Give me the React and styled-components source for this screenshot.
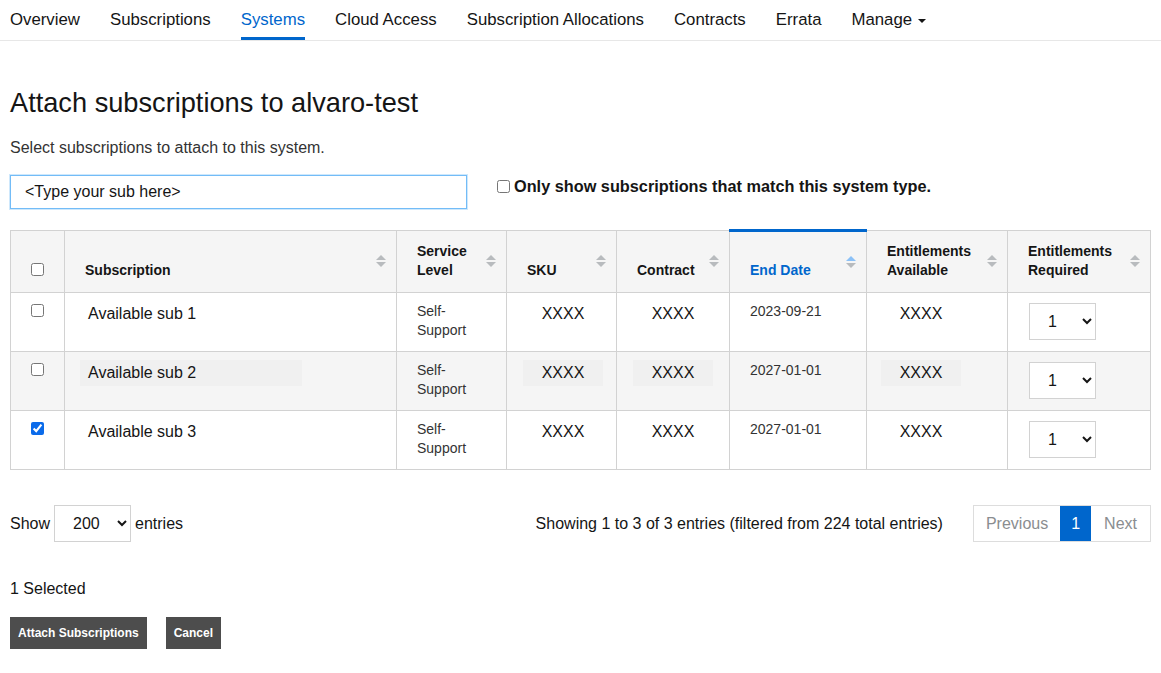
import React from 'react'
import styled, { createGlobalStyle } from 'styled-components'

const GlobalStyle = createGlobalStyle`
body {
  margin: 0;
  background: #fff;
  color: #151515;
  font-family: "Liberation Sans", Arial, sans-serif;
}
* { box-sizing: border-box; }
`

const Nav = styled.nav`
  display: flex;
  gap: 30px;
  padding: 0 10px;
  height: 41px;
  border-bottom: 1px solid #e7e7e7;
`

const NavItem = styled.a`
  display: flex;
  align-items: center;
  gap: 6px;
  font-size: 16.8px;
  font-weight: 500;
  color: ${p => (p.$active ? '#0066cc' : '#151515')};
  border-bottom: 3px solid ${p => (p.$active ? '#0066cc' : 'transparent')};
  padding-top: 3px;
  height: 40px;
  text-decoration: none;
`

const Caret = styled.span`
  width: 0;
  height: 0;
  border-left: 4px solid transparent;
  border-right: 4px solid transparent;
  border-top: 4px solid #151515;
  margin-top: 2px;
`

const Main = styled.main`
  padding: 0 10px;
`

const Title = styled.h1`
  margin: 46px 0 0;
  font-size: 27.2px;
  font-weight: 400;
  line-height: 32px;
`

const Lead = styled.p`
  margin: 18px 0 0;
  font-size: 16px;
  color: #333;
  line-height: 22px;
`

const FilterRow = styled.div`
  display: flex;
  align-items: flex-start;
  gap: 30px;
  margin-top: 16px;
`

const SearchInput = styled.input`
  width: 457px;
  height: 34px;
  border: 1px solid #73bcf7;
  box-shadow: 0 0 0 1px rgba(115, 188, 247, 0.35);
  padding: 0 14px;
  font-size: 16px;
  font-family: inherit;
  color: #151515;
  &::placeholder { color: #151515; }
`

const CheckLabel = styled.label`
  display: flex;
  align-items: center;
  gap: 4px;
  font-size: 16.3px;
  font-weight: 700;
  margin-top: 2px;
`

const Box = styled.input.attrs({ type: 'checkbox' })`
  display: block;
  width: 13px;
  height: 13px;
  margin: 0;
  accent-color: #0b6bea;
`

const Table = styled.table`
  width: 1140px;
  table-layout: fixed;
  margin-top: 20px;
  border-collapse: collapse;
  border: 1px solid #d2d2d2;
`

const Th = styled.th`
  position: relative;
  width: ${p => p.$w}px;
  height: 62px;
  background: #f5f5f5;
  border: 1px solid #d2d2d2;
  border-top: ${p => (p.$sorted ? '3px solid #0066cc' : '1px solid #d2d2d2')};
  padding: 0 30px 12px 20px;
  text-align: left;
  vertical-align: bottom;
  font-size: 14px;
  font-weight: 700;
  line-height: 19px;
  color: ${p => (p.$sorted ? '#0066cc' : '#151515')};
`

const CheckTh = styled(Th)`
  padding: 0 0 16px 20px;
`

const SortIcon = styled.span`
  position: absolute;
  right: 10px;
  top: 24px;
  display: flex;
  flex-direction: column;
  gap: 2px;
  &::before, &::after {
    content: '';
    width: 0;
    height: 0;
    border-left: 5px solid transparent;
    border-right: 5px solid transparent;
  }
  &::before { border-bottom: 5px solid ${p => (p.$sorted ? '#8bc1f7' : '#b8bbbe')}; }
  &::after { border-top: 5px solid #b8bbbe; }
`

const Tr = styled.tr`
  background: ${p => (p.$alt ? '#f5f5f5' : '#fff')};
`

const Td = styled.td`
  height: 59px;
  border: 1px solid #d2d2d2;
  padding: ${p => (p.$small ? '9px 20px' : `8px 10px 8px ${p.$pl ?? 20}px`)};
  vertical-align: top;
  font-size: ${p => (p.$small ? '14px' : '16px')};
  line-height: ${p => (p.$small ? '19px' : '22px')};
  color: ${p => (p.$small ? '#333' : '#151515')};
`

const CheckTd = styled(Td)`
  padding: 11px 0 0 20px;
`

const Chip = styled.span`
  display: inline-block;
  padding: 2px 8px;
  background: ${p => (p.$alt ? '#f0f0f0' : 'transparent')};
  min-width: ${p => p.$min || 0}px;
  text-align: ${p => (p.$left ? 'left' : 'center')};
`

const Select = styled.select`
  width: ${p => p.$w}px;
  height: 37px;
  border: 1px solid #d2d2d2;
  background: #fff;
  font-size: 16px;
  font-family: inherit;
  color: #151515;
  padding: 0 6px 0 14px;
`

const SelectTd = styled(Td)`
  padding: 10px 0 0 21px;
`

const Footer = styled.div`
  display: flex;
  align-items: center;
  justify-content: space-between;
  margin-top: 35px;
`

const ShowGroup = styled.div`
  display: flex;
  align-items: center;
  gap: 4px;
  font-size: 16px;
`

const Info = styled.div`
  display: flex;
  align-items: center;
  gap: 30px;
  font-size: 16px;
  color: #151515;
`

const Pager = styled.div`
  display: flex;
  border: 1px solid #ddd;
  height: 37px;
`

const PageBtn = styled.span`
  display: flex;
  align-items: center;
  padding: 0 ${p => p.$pad}px;
  font-size: 16px;
  color: ${p => (p.$active ? '#fff' : '#8a8d90')};
  background: ${p => (p.$active ? '#0066cc' : '#fff')};
`

const Selected = styled.p`
  margin: 38px 0 0;
  font-size: 16px;
`

const Actions = styled.div`
  display: flex;
  gap: 19px;
  margin-top: 19px;
`

const Button = styled.button`
  height: 32px;
  padding: 0 8px;
  border: none;
  background: #4d4d4d;
  color: #fff;
  font-family: inherit;
  font-size: 12px;
  font-weight: 700;
`

const tabs = ['Overview', 'Subscriptions', 'Systems', 'Cloud Access', 'Subscription Allocations', 'Contracts', 'Errata']

const cols = [
  { label: 'Subscription', w: 332 },
  { label: <>Service<br />Level</>, w: 110 },
  { label: 'SKU', w: 110 },
  { label: 'Contract', w: 113 },
  { label: 'End Date', w: 137, sorted: true },
  { label: <>Entitlements<br />Available</>, w: 141 },
  { label: <>Entitlements<br />Required</>, w: 143 },
]

const rows = [
  { name: 'Available sub 1', end: '2023-09-21', checked: false },
  { name: 'Available sub 2', end: '2027-01-01', checked: false, alt: true },
  { name: 'Available sub 3', end: '2027-01-01', checked: true },
]

const App = () => {
  return (
    <>
      <GlobalStyle />
      <Nav>
        {tabs.map(t => (
          <NavItem key={t} $active={t === 'Systems'}>{t}</NavItem>
        ))}
        <NavItem>Manage <Caret /></NavItem>
      </Nav>
      <Main>
        <Title>Attach subscriptions to alvaro-test</Title>
        <Lead>Select subscriptions to attach to this system.</Lead>
        <FilterRow>
          <SearchInput placeholder="<Type your sub here>" />
          <CheckLabel><Box /> Only show subscriptions that match this system type.</CheckLabel>
        </FilterRow>

        <Table>
          <thead>
            <tr>
              <CheckTh $w={54}><Box /></CheckTh>
              {cols.map((c, i) => (
                <Th key={i} $w={c.w} $sorted={c.sorted}>
                  {c.label}
                  <SortIcon $sorted={c.sorted} />
                </Th>
              ))}
            </tr>
          </thead>
          <tbody>
            {rows.map(r => (
              <Tr key={r.name} $alt={r.alt}>
                <CheckTd><Box defaultChecked={r.checked} /></CheckTd>
                <Td $pl={15}><Chip $alt={r.alt} $min={222} $left>{r.name}</Chip></Td>
                <Td $small>Self-<br />Support</Td>
                <Td $pl={16}><Chip $alt={r.alt} $min={80}>XXXX</Chip></Td>
                <Td $pl={16}><Chip $alt={r.alt} $min={80}>XXXX</Chip></Td>
                <Td $small>{r.end}</Td>
                <Td $pl={14}><Chip $alt={r.alt} $min={80}>XXXX</Chip></Td>
                <SelectTd><Select $w={67} defaultValue="1"><option>1</option><option>2</option></Select></SelectTd>
              </Tr>
            ))}
          </tbody>
        </Table>

        <Footer>
          <ShowGroup>
            Show
            <Select $w={77} defaultValue="200"><option>200</option></Select>
            entries
          </ShowGroup>
          <Info>
            Showing 1 to 3 of 3 entries (filtered from 224 total entries)
            <Pager>
              <PageBtn $pad={12}>Previous</PageBtn>
              <PageBtn $pad={11} $active>1</PageBtn>
              <PageBtn $pad={13}>Next</PageBtn>
            </Pager>
          </Info>
        </Footer>

        <Selected>1 Selected</Selected>
        <Actions>
          <Button>Attach Subscriptions</Button>
          <Button>Cancel</Button>
        </Actions>
      </Main>
    </>
  )
}

export default App
